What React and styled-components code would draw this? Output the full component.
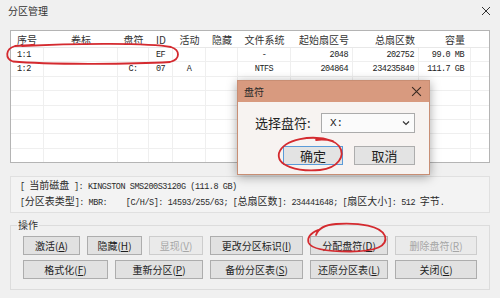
import React from "react";
import styled, { createGlobalStyle } from "styled-components";

const GlobalStyle = createGlobalStyle`
  html, body {
    margin: 0;
    padding: 0;
    background: #f0f0f0;
  }
  body {
    font-family: "Noto Sans CJK SC", "Liberation Sans", sans-serif;
  }
`;

const Window = styled.div`
  position: relative;
  width: 500px;
  height: 298px;
  overflow: hidden;
  background: #f0f0f0;
  color: #222;
  font-family: "Noto Sans CJK SC", sans-serif;
`;

const TitleBar = styled.div`
  height: 22px;
  display: flex;
  align-items: center;
  justify-content: space-between;
  padding: 0 9px 0 8px;
  font-size: 10px;
  line-height: 14px;
  color: #333;
`;

const ListBox = styled.div`
  margin: 8px 10px 0;
  height: 131px;
  border: 1px solid #b4b4b4;
  background: #fff;
  overflow: hidden;
`;

const COLS = "33px 74px 31px 24px 33px 32px 53px 62px 66px 52px 18px";

const HeaderRow = styled.div`
  display: grid;
  grid-template-columns: ${COLS};
  height: 17px;
  padding-top: 2px;
  box-sizing: border-box;
  border-bottom: 1px solid #e8e8e8;
  font-size: 10px;
  line-height: 14px;
  color: #333;
  align-items: center;
`;

const Row = styled.div`
  display: grid;
  grid-template-columns: ${COLS};
  height: 14.4px;
  box-sizing: border-box;
  border-bottom: 1px solid #efefef;
  font-family: "Liberation Mono", monospace;
  font-size: 8.5px;
  line-height: 12px;
  letter-spacing: -0.5px;
  color: #222;
`;

const Cell = styled.div`
  display: flex;
  align-items: center;
  justify-content: ${(p) =>
    p.$align === "right" ? "flex-end" : p.$align === "left" ? "flex-start" : "center"};
  padding: 0 ${(p) => (p.$pad != null ? p.$pad : 4)}px 0 ${(p) => (p.$align === "left" ? 6 : 4)}px;
  white-space: nowrap;
  border-right: ${(p) => (p.$line ? "1px solid #efefef" : "none")};
`;

const InfoBox = styled.div`
  margin: 13px 10px 0;
  height: 34px;
  border: 1px solid #e0e0e0;
  background: #f3f3f3;
  padding: 1px 9px 0;
  box-sizing: content-box;
`;

const InfoLine = styled.div`
  font-family: "Liberation Mono", monospace;
  font-size: 8.5px;
  letter-spacing: -0.45px;
  line-height: 13px;
  white-space: pre;
  color: #2a2a2a;
`;

const Cjk = styled.span`
  font-family: "Noto Sans CJK SC", sans-serif;
  font-size: 10px;
  letter-spacing: 0;
`;

const Group = styled.fieldset`
  margin: 5px 10px 0;
  padding: 4px 12px 10px;
  border: 1px solid #dcdcdc;
  display: flex;
  flex-direction: column;
  gap: 5px;
`;

const Legend = styled.legend`
  margin-left: -6px;
  padding: 0 1px;
  font-size: 10px;
  line-height: 14px;
  color: #333;
`;

const ButtonRow = styled.div`
  display: flex;
  gap: 7px;
`;

const Btn = styled.button`
  width: ${(p) => p.$w}px;
  height: 19px;
  padding: 0;
  margin: 0;
  box-sizing: border-box;
  border: 1px solid ${(p) => (p.disabled ? "#cdcdcd" : "#adadad")};
  background: ${(p) => (p.disabled ? "#eaeaea" : "#e1e1e1")};
  color: ${(p) => (p.disabled ? "#a6a6a6" : "#1e1e1e")};
  font-family: "Noto Sans CJK SC", sans-serif;
  font-size: 10px;
  line-height: 17px;
`;

const Dialog = styled.div`
  position: absolute;
  left: 237px;
  top: 80px;
  width: 193px;
  height: 95px;
  box-sizing: border-box;
  border: 1px solid #c88e74;
  background: #f7f3f1;
  box-shadow: 0 2px 10px rgba(0, 0, 0, 0.35);
  display: flex;
  flex-direction: column;
`;

const DialogTitle = styled.div`
  height: 21px;
  flex: none;
  background: #d89a7f;
  display: flex;
  align-items: center;
  justify-content: space-between;
  padding: 0 7px 0 6px;
  font-size: 10px;
  line-height: 14px;
  color: #2a2a2a;
`;

const DialogBody = styled.div`
  padding: 11px 14px 0 17px;
  display: flex;
  flex-direction: column;
  gap: 13px;
`;

const SelectRow = styled.div`
  display: flex;
  align-items: center;
  height: 20px;
`;

const SelectLabel = styled.span`
  width: 66px;
  font-size: 13px;
  line-height: 18px;
  color: #222;
  white-space: nowrap;
`;

const Select = styled.div`
  width: 94px;
  height: 20px;
  box-sizing: border-box;
  border: 1px solid #ababab;
  background: #fbfbfb;
  display: flex;
  align-items: center;
  justify-content: space-between;
  padding: 0 4px 0 8px;
  font-family: "Liberation Mono", monospace;
  font-size: 11px;
  color: #222;
`;

const DialogButtons = styled.div`
  display: flex;
  justify-content: flex-end;
  gap: 11px;
`;

const DlgBtn = styled.button`
  width: ${(p) => p.$w}px;
  height: 19px;
  margin: 0;
  padding: 0;
  box-sizing: border-box;
  border: 1px solid ${(p) => (p.$primary ? "#5b9bd8" : "#adadad")};
  background: #e3e3e3;
  font-family: "Noto Sans CJK SC", sans-serif;
  font-size: 13px;
  line-height: 17px;
  color: #1e1e1e;
`;

const Marks = styled.svg`
  position: absolute;
  left: 0;
  top: 0;
  pointer-events: none;
`;

const CloseIcon = ({ size = 10, color = "#333" }) => (
  <svg width={size} height={size} viewBox="0 0 10 10">
    <path d="M1 1 L9 9 M9 1 L1 9" stroke={color} strokeWidth="1" fill="none" />
  </svg>
);

const header = [
  ["序号", "left"],
  ["卷标", "center"],
  ["盘符", "center"],
  ["ID", "center"],
  ["活动", "center"],
  ["隐藏", "center"],
  ["文件系统", "center"],
  ["起始扇区号", "right"],
  ["总扇区数", "right"],
  ["容量", "right", 6],
  ["", "center"],
];

const empty = ["", "", "", "", "", "", "", "", "", "", ""];

const rows = [
  ["1:1", "", "", "EF", "", "", "-", "2048", "202752", "99.0 MB", ""],
  ["1:2", "", "C:", "07", "A", "", "NTFS", "204864", "234235840", "111.7 GB", ""],
  empty,
  empty,
  empty,
  empty,
  empty,
  empty,
];

const Label = ({ text, k }) => (
  <>
    {text}(<u>{k}</u>)
  </>
);

const row1 = [
  { t: "激活", k: "A", w: 57 },
  { t: "隐藏", k: "H", w: 55 },
  { t: "显现", k: "V", w: 54, off: true },
  { t: "更改分区标识", k: "I", w: 93 },
  { t: "分配盘符", k: "D", w: 78 },
  { t: "删除盘符", k: "R", w: 82, off: true },
];

const row2 = [
  { t: "格式化", k: "F", w: 85 },
  { t: "重新分区", k: "P", w: 88 },
  { t: "备份分区表", k: "S", w: 93 },
  { t: "还原分区表", k: "L", w: 78 },
  { t: "关闭", k: "C", w: 82 },
];

const App = () => {
  return (
    <Window>
      <GlobalStyle />
      <TitleBar>
        <span>分区管理</span>
        <CloseIcon />
      </TitleBar>

      <ListBox>
        <HeaderRow>
          {header.map(([h, a, pad], i) => (
            <Cell key={i} $align={a} $pad={pad}>
              {h}
            </Cell>
          ))}
        </HeaderRow>
        {rows.map((r, ri) => (
          <Row key={ri}>
            {r.map((v, ci) => (
              <Cell
                key={ci}
                $align={header[ci][1]}
                $pad={header[ci][2]}
                $line={ci < r.length - 1}
              >
                {v}
              </Cell>
            ))}
          </Row>
        ))}
      </ListBox>

      <InfoBox>
        <InfoLine>
          [ <Cjk>当前磁盘</Cjk> ]: KINGSTON SMS200S3120G (111.8 GB)
        </InfoLine>
        <InfoLine>
          [<Cjk>分区表类型</Cjk>]: MBR:    [C/H/S]: 14593/255/63; [<Cjk>总扇区数</Cjk>]: 234441648; [
          <Cjk>扇区大小</Cjk>]: 512 <Cjk>字节</Cjk>.
        </InfoLine>
      </InfoBox>

      <Group>
        <Legend>操作</Legend>
        <ButtonRow>
          {row1.map((b) => (
            <Btn key={b.t} $w={b.w} disabled={b.off}>
              <Label text={b.t} k={b.k} />
            </Btn>
          ))}
        </ButtonRow>
        <ButtonRow>
          {row2.map((b) => (
            <Btn key={b.t} $w={b.w}>
              <Label text={b.t} k={b.k} />
            </Btn>
          ))}
        </ButtonRow>
      </Group>

      <Dialog>
        <DialogTitle>
          <span>盘符</span>
          <CloseIcon size={11} color="#3a2a22" />
        </DialogTitle>
        <DialogBody>
          <SelectRow>
            <SelectLabel>选择盘符:</SelectLabel>
            <Select>
              <span>X:</span>
              <svg width="8" height="6" viewBox="0 0 8 6">
                <path d="M1 1.5 L4 4.5 L7 1.5" stroke="#333" strokeWidth="1.2" fill="none" />
              </svg>
            </Select>
          </SelectRow>
          <DialogButtons>
            <DlgBtn $w={60} $primary>确定</DlgBtn>
            <DlgBtn $w={61}>取消</DlgBtn>
          </DialogButtons>
        </DialogBody>
      </Dialog>

      <Marks width="500" height="298" viewBox="0 0 500 298">
        <g stroke="#d42a2f" strokeWidth="1.8" fill="none" strokeLinecap="round">
          <path d="M22 46 C80 43, 150 43, 171 47 C180 50, 181 59, 170 62 C130 64.5, 45 64.5, 13 61.5 C5 59, 5 49, 15 46 L34 45" />
          <path d="M333 141 C312 134, 284 139, 279 153 C276 166, 298 172, 320 170 C338 168, 346 156, 339 146 C335 141, 326 139, 316 140" />
          <path d="M316 235 C318 229, 323 225, 336 224 C360 222.5, 381 226, 385 236 C388 246, 376 251.5, 350 251.5 C325 251.5, 311 249, 308.5 242.5 C307 237, 311 233, 318 230" />
        </g>
      </Marks>
    </Window>
  );
};

export default App;
